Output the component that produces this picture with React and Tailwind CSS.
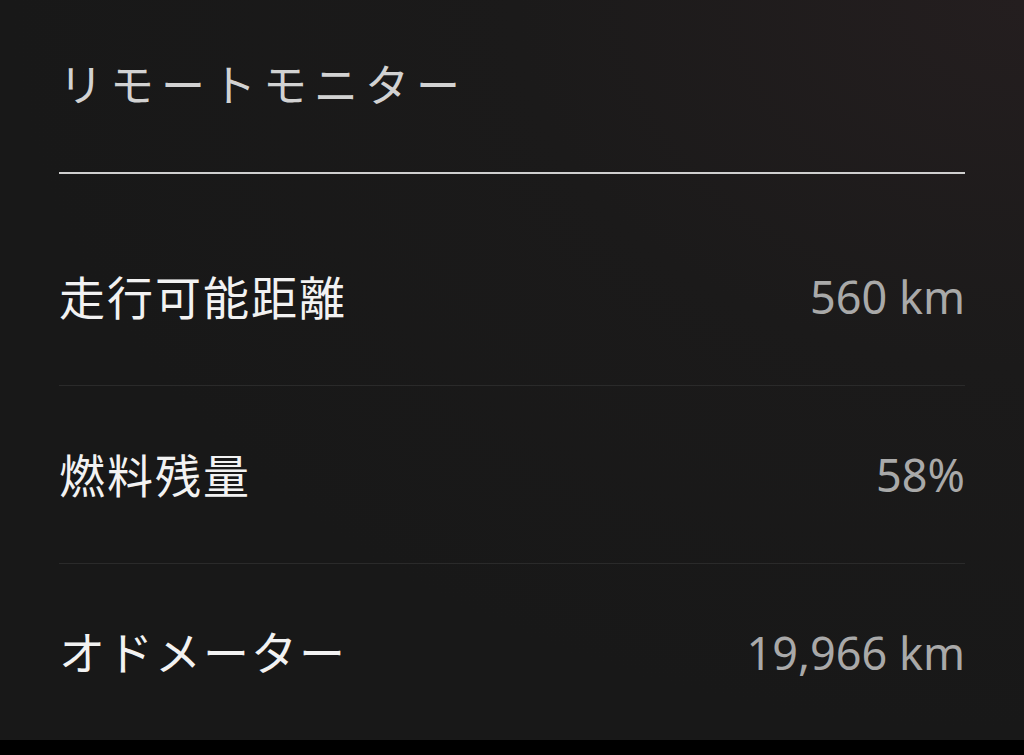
import React from "react";

const rows = [
  { label: "走行可能距離", value: "560 km" },
  { label: "燃料残量", value: "58%" },
  { label: "オドメーター", value: "19,966 km" },
];

export default function App() {
  return (
    <div
      className="w-[1024px] h-[755px] flex flex-col bg-[#181818] overflow-hidden"
      style={{ fontFamily: '"Noto Sans", "Noto Sans CJK JP", sans-serif' }}
    >
      <div className="flex-1 flex flex-col px-[59px] bg-[radial-gradient(ellipse_at_top_right,#241e1f_0%,#1b1a1a_35%,#181818_70%)]">
        {/* Header */}
        <div className="pt-[63px] h-[172px]">
          <h1 className="text-[44px] leading-none font-normal text-[#d2d2d2] tracking-[7px]">
            リモートモニター
          </h1>
        </div>
        <div className="h-[2px] bg-[#cfcfcf]" />

        {/* Rows */}
        <div className="pt-[34px] flex flex-col">
          {rows.map((row, i) => (
            <div
              key={row.label}
              className={
                i < rows.length - 1
                  ? "h-[178px] flex items-center justify-between border-b border-[#2a2a2a]"
                  : "h-[176px] flex items-center justify-between"
              }
            >
              <span className="text-[46px] leading-none font-normal text-[#f2f2f2] tracking-[2px]">
                {row.label}
              </span>
              <span className="text-[45px] leading-none text-[#a9a9a9]">
                {row.value}
              </span>
            </div>
          ))}
        </div>
      </div>
      <div className="h-[16px] bg-black" />
    </div>
  );
}
